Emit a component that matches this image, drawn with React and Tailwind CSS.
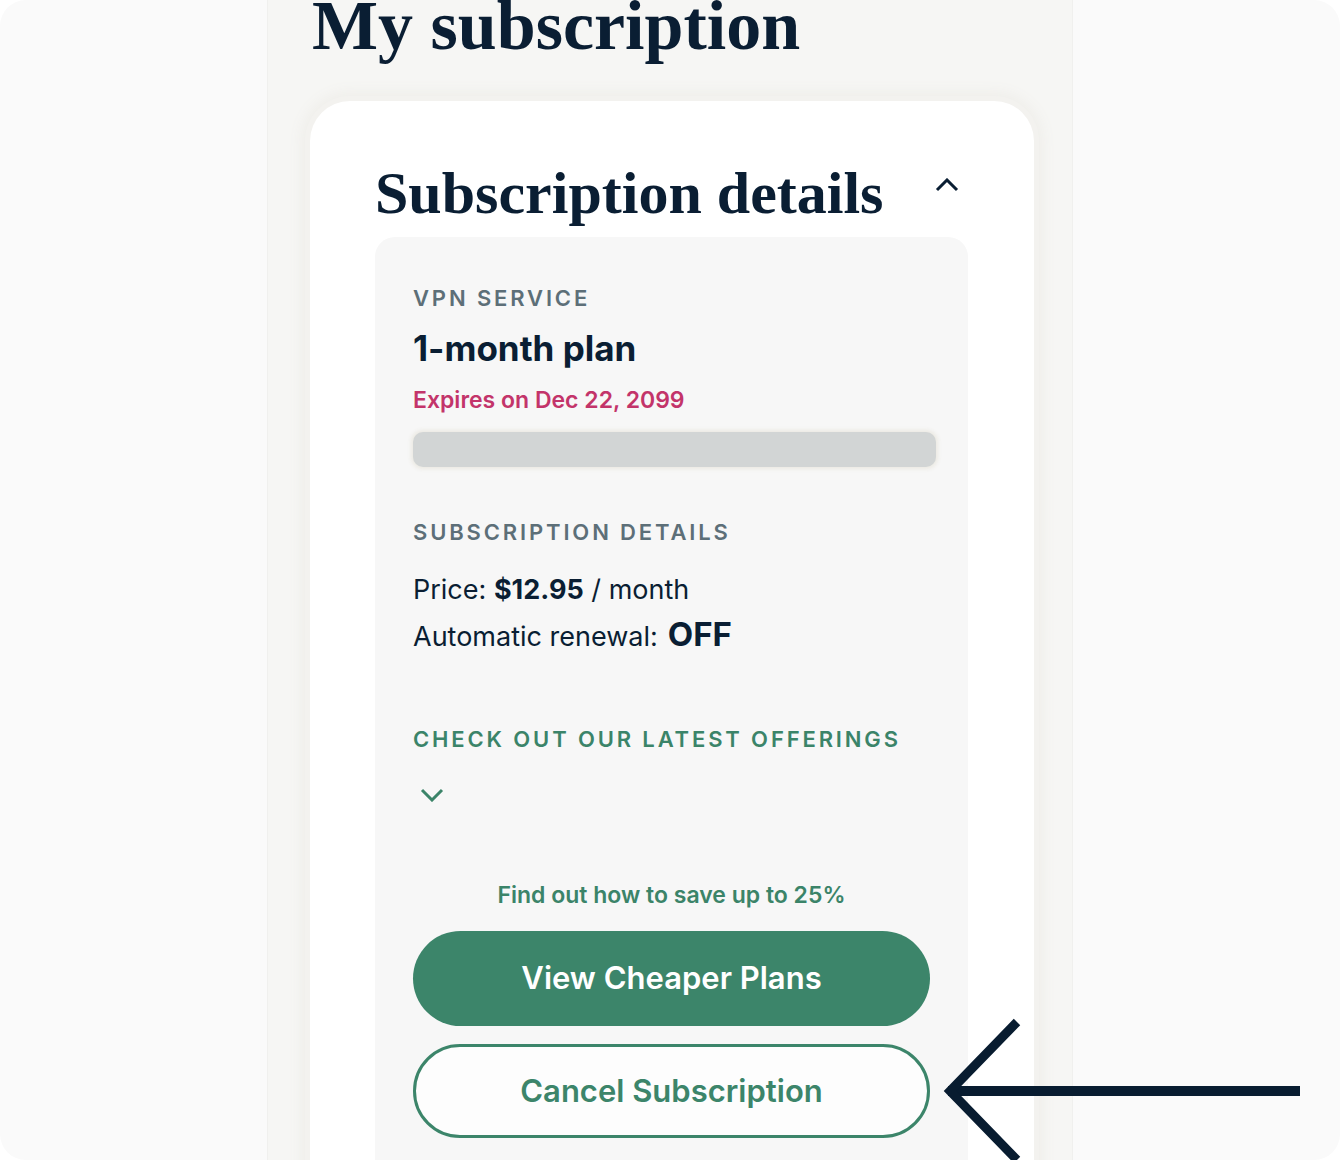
export default function App() {
  const label =
    "font-['Inter',sans-serif] font-semibold uppercase text-[22px] leading-[24px] tracking-[0.13em]";
  return (
    <div className="h-[1160px] overflow-hidden bg-white">
      <div className="relative h-full overflow-hidden rounded-[26px] bg-[#fafafa] font-['Inter',sans-serif] text-[#0a1e33]">
        <div className="mx-auto flex h-full w-[806px] flex-col border-x border-[#f0f0ee] bg-[#f6f6f4]">
          <h1 className="-mt-[9px] ml-[44px] font-['Liberation_Serif',serif] text-[70px] font-bold leading-[70px]">
            My subscription
          </h1>
          <div className="ml-[42px] mt-[40px] h-[1200px] w-[724px] shrink-0 rounded-[40px] bg-white pl-[65px] pr-[66px] pt-[62px] shadow-[0_0_0_5px_#f3f2ef,0_0_14px_9px_#efeeea]">
            <div className="flex items-start justify-between">
              <h2 className="font-['Liberation_Serif',serif] text-[60px] font-bold leading-[60px]">
                Subscription details
              </h2>
              <svg
                width="24"
                height="14"
                viewBox="0 0 24 14"
                className="mr-[9px] mt-[15px]"
                fill="none"
                stroke="#0a1e33"
                strokeWidth="3"
              >
                <path d="M2 12 L12 2 L22 12" />
              </svg>
            </div>
            <div className="mt-[14px] h-[1000px] rounded-[20px] bg-[#f7f7f7] px-[38px] pt-[49px]">
              <div className={`${label} text-[#5d6f78]`}>VPN Service</div>
              <div className="mt-[18px] text-[35px] font-bold leading-[40px]">1-month plan</div>
              <div className="mt-[18px] text-[23px] font-semibold leading-[28px] text-[#c3346a]">
                Expires on Dec 22, 2099
              </div>
              <div className="-mr-[6px] mt-[18px] h-[35px] rounded-[10px] bg-[#d2d5d5] shadow-[0_0_4px_2px_#ebe9e2]" />
              <div className={`${label} mt-[53px] text-[#5d6f78]`}>Subscription details</div>
              <div className="mt-[30px] text-[27px] leading-[32px]">
                Price: <span className="font-bold">$12.95</span> / month
              </div>
              <div className="mt-[10px] flex items-baseline">
                <span className="text-[27px] leading-[32px]">Automatic renewal:</span>
                <span className="ml-[10px] text-[33px] font-bold leading-[36px]">OFF</span>
              </div>
              <div className={`${label} mt-[74px] text-[#3b8469]`}>Check out our latest offerings</div>
              <svg
                width="24"
                height="14"
                viewBox="0 0 24 14"
                className="ml-[7px] mt-[37px]"
                fill="none"
                stroke="#3b8469"
                strokeWidth="3"
              >
                <path d="M2 2 L12 12 L22 2" />
              </svg>
              <div className="mt-[79px] text-center text-[23px] font-semibold leading-[28px] text-[#3b8469]">
                Find out how to save up to 25%
              </div>
              <button className="mt-[22px] flex h-[95px] w-full items-center justify-center rounded-full bg-[#3c856a] text-[31px] font-semibold text-white">
                View Cheaper Plans
              </button>
              <button className="mt-[18px] flex h-[94px] w-full items-center justify-center rounded-full border-[3px] border-[#3c856a] bg-[#fdfdfd] text-[31px] font-semibold text-[#3c856a]">
                Cancel Subscription
              </button>
            </div>
          </div>
        </div>
        <svg
          className="absolute left-0 top-0"
          width="1340"
          height="1160"
          viewBox="0 0 1340 1160"
          fill="none"
          stroke="#081c30"
        >
          <path d="M948 1091 L1300 1091" strokeWidth="10" />
          <path d="M1017 1022 L950 1091 L1017 1160" strokeWidth="9" strokeLinejoin="miter" />
        </svg>
      </div>
    </div>
  );
}
